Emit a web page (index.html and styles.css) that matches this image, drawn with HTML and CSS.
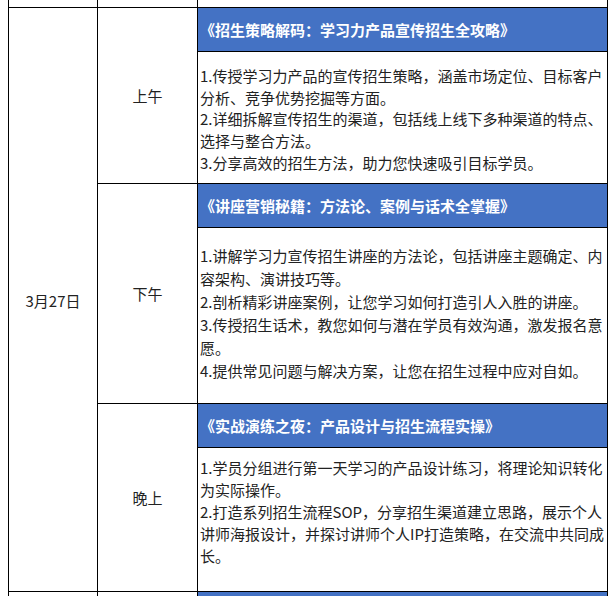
FILE: index.html
```html
<!DOCTYPE html>
<html lang="zh-CN">
<head>
<meta charset="utf-8">
<title>课程安排</title>
<link rel="stylesheet" href="styles.css">
</head>
<body>
<div class="sheet">
  <div class="cell top c1"></div>
  <div class="cell top c2"></div>
  <div class="cell top c3"></div>

  <div class="cell date">3月27日</div>

  <div class="cell time t-am">上午</div>
  <div class="cell head h-am">《招生策略解码：学习力产品宣传招生全攻略》</div>
  <div class="cell body b-am">
    <p>1.传授学习力产品的宣传招生策略，涵盖市场定位、目标客户分析、竞争优势挖掘等方面。</p>
    <p>2.详细拆解宣传招生的渠道，包括线上线下多种渠道的特点、选择与整合方法。</p>
    <p>3.分享高效的招生方法，助力您快速吸引目标学员。</p>
  </div>

  <div class="cell time t-pm">下午</div>
  <div class="cell head h-pm">《讲座营销秘籍：方法论、案例与话术全掌握》</div>
  <div class="cell body b-pm">
    <p>1.讲解学习力宣传招生讲座的方法论，包括讲座主题确定、内容架构、演讲技巧等。</p>
    <p>2.剖析精彩讲座案例，让您学习如何打造引人入胜的讲座。</p>
    <p>3.传授招生话术，教您如何与潜在学员有效沟通，激发报名意愿。</p>
    <p>4.提供常见问题与解决方案，让您在招生过程中应对自如。</p>
  </div>

  <div class="cell time t-ev">晚上</div>
  <div class="cell head h-ev">《实战演练之夜：产品设计与招生流程实操》</div>
  <div class="cell body b-ev">
    <p>1.学员分组进行第一天学习的产品设计练习，将理论知识转化为实际操作。</p>
    <p>2.打造系列招生流程SOP，分享招生渠道建立思路，展示个人讲师海报设计，并探讨讲师个人IP打造策略，在交流中共同成长。</p>
  </div>

  <div class="cell next c1"></div>
  <div class="cell next c2"></div>
  <div class="cell head next c3"></div>
</div>
</body>
</html>
```

FILE: styles.css
```css
html, body {
  margin: 0;
  padding: 0;
  overflow: hidden;
  background: #ffffff;
}

body {
  font-family: "Noto Sans CJK SC", "Noto Sans", sans-serif;
  font-size: 15px;
  color: #222222;
}

.sheet {
  margin-left: 8px;
  width: 598px;
  display: grid;
  grid-template-columns: 88px 99px 409px;
  grid-template-rows: 7px 43px 131px 43px 175px 43px 143px 43px;
  gap: 1px;
  padding: 0 1px 1px 1px;
  background: #000000;
}

.cell {
  background: #ffffff;
  min-width: 0;
}

.c1 { grid-column: 1; }
.c2 { grid-column: 2; }
.c3 { grid-column: 3; }

.top { grid-row: 1; }
.next { grid-row: 8; }

.date {
  grid-column: 1;
  grid-row: 2 / 8;
  display: flex;
  align-items: center;
  justify-content: center;
  padding-top: 1px;
}

.time {
  grid-column: 2;
  display: flex;
  align-items: center;
  justify-content: center;
}

.t-am { grid-row: 2 / 4; }
.t-pm { grid-row: 4 / 6; }
.t-ev { grid-row: 6 / 8; }

.head {
  grid-column: 3;
  background: #4472c4;
  color: #ffffff;
  font-weight: bold;
  display: flex;
  align-items: center;
  padding: 0 2px 0 2px;
  line-height: 22px;
}

.h-am { grid-row: 2; }
.h-pm { grid-row: 4; }
.h-ev { grid-row: 6; }

.body {
  grid-column: 3;
  padding: 0 2px 0 2px;
  line-height: 21.7px;
}

.body p {
  margin: 0;
}

.b-am { grid-row: 3; padding-top: 13px; }
.b-pm { grid-row: 5; padding-top: 16px; line-height: 23px; }
.b-ev { grid-row: 7; padding-top: 9px; line-height: 22px; }
```
